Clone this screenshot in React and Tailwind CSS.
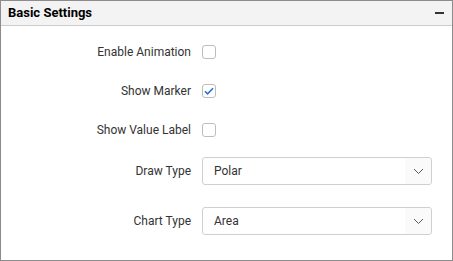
import React, { useState } from "react";

const ChevronDown = () => (
  <svg width="11" height="7" viewBox="0 0 11 7" fill="none">
    <path d="M1 1l4.5 4.5L10 1" stroke="#5a5a5a" strokeWidth="1" />
  </svg>
);

const CheckRow = ({ label, checked, onToggle }) => (
  <div className="flex h-[39px] items-center">
    <div className="w-[190px] text-right text-[12px] text-[#333]">{label}</div>
    <button
      onClick={onToggle}
      className="ml-[11px] flex h-[14px] w-[14px] items-center justify-center rounded-[3px] border border-[#bdbdbd] bg-white"
    >
      {checked && (
        <svg width="10" height="8" viewBox="0 0 10 8" fill="none">
          <path d="M1 4.2l2.6 2.6L9 1.2" stroke="#2f6fe4" strokeWidth="1.6" />
        </svg>
      )}
    </button>
  </div>
);

const SelectRow = ({ label, value }) => (
  <div className="flex h-[50px] items-center">
    <div className="w-[190px] text-right text-[12px] text-[#333]">{label}</div>
    <div className="ml-[11px] flex h-[28px] w-[230px] items-center rounded-[3px] border border-[#cfcfcf] bg-white">
      <div className="flex-1 pl-[11px] text-[12px] text-[#333]">{value}</div>
      <div className="flex h-full w-[26px] items-center justify-center rounded-r-[3px] bg-[#fafafa]">
        <ChevronDown />
      </div>
    </div>
  </div>
);

export default function App() {
  const [animation, setAnimation] = useState(false);
  const [marker, setMarker] = useState(true);
  const [valueLabel, setValueLabel] = useState(false);

  return (
    <div
      className="flex h-[261px] w-[453px] flex-col border border-[#8c8c8c] bg-white"
      style={{ fontFamily: "Roboto, 'Liberation Sans', sans-serif" }}
    >
      <div className="flex h-[25px] items-center justify-between border-b border-[#cccccc] bg-[#f3f3f3] pl-[7px] pr-[8px]">
        <span className="text-[13px] font-bold text-black">Basic Settings</span>
        <span className="h-[2px] w-[9px] bg-[#333]" />
      </div>
      <div className="flex flex-col pt-[6px]">
        <CheckRow label="Enable Animation" checked={animation} onToggle={() => setAnimation(!animation)} />
        <CheckRow label="Show Marker" checked={marker} onToggle={() => setMarker(!marker)} />
        <CheckRow label="Show Value Label" checked={valueLabel} onToggle={() => setValueLabel(!valueLabel)} />
        <div className="-mt-[3px] flex flex-col">
          <SelectRow label="Draw Type" value="Polar" />
          <SelectRow label="Chart Type" value="Area" />
        </div>
      </div>
    </div>
  );
}
